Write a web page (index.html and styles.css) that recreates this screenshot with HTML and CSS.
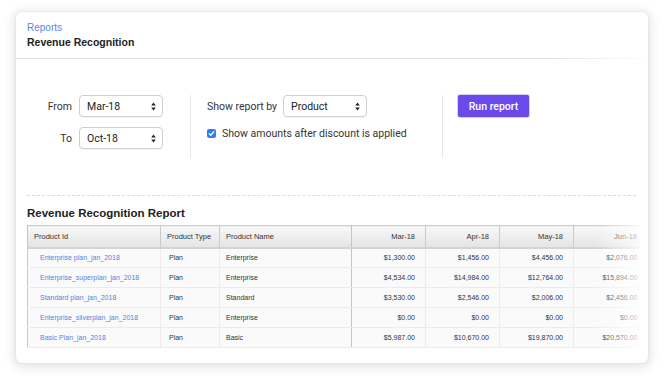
FILE: index.html
```html
<!DOCTYPE html>
<html>
<head>
<meta charset="utf-8">
<link rel="stylesheet" href="styles.css">
</head>
<body>
<div class="card">
  <header class="head">
    <a class="crumb">Reports</a>
    <h1 class="title">Revenue Recognition</h1>
  </header>
  <section class="form">
    <div class="group dates">
      <div class="field">
        <label class="lbl">From</label>
        <div class="select">Mar-18<svg class="arrows" width="5" height="9" viewBox="0 0 5 9"><path d="M2.5 0.5 L4.8 3.6 L0.2 3.6 Z M2.5 8.5 L4.8 5.4 L0.2 5.4 Z" fill="#222"/></svg></div>
      </div>
      <div class="field">
        <label class="lbl">To</label>
        <div class="select">Oct-18<svg class="arrows" width="5" height="9" viewBox="0 0 5 9"><path d="M2.5 0.5 L4.8 3.6 L0.2 3.6 Z M2.5 8.5 L4.8 5.4 L0.2 5.4 Z" fill="#222"/></svg></div>
      </div>
    </div>
    <div class="group by">
      <div class="field">
        <label class="lbl2">Show report by</label>
        <div class="select">Product<svg class="arrows" width="5" height="9" viewBox="0 0 5 9"><path d="M2.5 0.5 L4.8 3.6 L0.2 3.6 Z M2.5 8.5 L4.8 5.4 L0.2 5.4 Z" fill="#222"/></svg></div>
      </div>
      <div class="check">
        <span class="box"><svg width="9" height="9" viewBox="0 0 9 9"><path d="M2.2 4.7 L3.8 6.2 L6.8 2.8" fill="none" stroke="#fff" stroke-width="1.3" stroke-linecap="round" stroke-linejoin="round"/></svg></span>
        <span>Show amounts after discount is applied</span>
      </div>
    </div>
    <div class="group run">
      <button class="btn">Run report</button>
    </div>
  </section>
  <section class="report">
    <h2 class="rtitle">Revenue Recognition Report</h2>
    <div class="tablewrap">
      <table class="grid">
        <colgroup>
          <col class="c-id"><col class="c-type"><col class="c-name"><col class="c-m"><col class="c-m"><col class="c-m"><col class="c-m">
        </colgroup>
        <thead>
          <tr><th>Product Id</th><th>Product Type</th><th class="lastfix">Product Name</th><th class="num">Mar-18</th><th class="num">Apr-18</th><th class="num">May-18</th><th class="num">Jun-18</th></tr>
        </thead>
        <tbody>
          <tr><td class="link">Enterprise plan_jan_2018</td><td class="type">Plan</td><td class="lastfix">Enterprise</td><td class="num">$1,300.00</td><td class="num">$1,456.00</td><td class="num">$4,456.00</td><td class="num">$2,076.00</td></tr>
          <tr><td class="link">Enterprise_superplan_jan_2018</td><td class="type">Plan</td><td class="lastfix">Enterprise</td><td class="num">$4,534.00</td><td class="num">$14,984.00</td><td class="num">$12,764.00</td><td class="num">$15,894.00</td></tr>
          <tr><td class="link">Standard plan_jan_2018</td><td class="type">Plan</td><td class="lastfix">Standard</td><td class="num">$3,530.00</td><td class="num">$2,546.00</td><td class="num">$2,006.00</td><td class="num">$2,456.00</td></tr>
          <tr><td class="link">Enterprise_silverplan_jan_2018</td><td class="type">Plan</td><td class="lastfix">Enterprise</td><td class="num">$0.00</td><td class="num">$0.00</td><td class="num">$0.00</td><td class="num">$0.00</td></tr>
          <tr><td class="link">Basic Plan_jan_2018</td><td class="type">Plan</td><td class="lastfix">Basic</td><td class="num">$5,987.00</td><td class="num">$10,670.00</td><td class="num">$19,870.00</td><td class="num">$20,570.00</td></tr>
        </tbody>
      </table>
      <div class="fade"></div>
    </div>
  </section>
</div>
</body>
</html>
```

FILE: styles.css
```css
* { box-sizing: border-box; }
html, body { margin: 0; padding: 0; background: #fff; }
body {
  width: 664px;
  height: 383px;
  overflow: hidden;
  font-family: "Liberation Sans", Arial, sans-serif;
  color: #222;
  padding: 12px 16px 0 16px;
}
.card {
  width: 632px;
  height: 351px;
  background: #fff;
  border-radius: 6px;
  box-shadow: 0 0 0 1px rgba(0,0,0,0.03), 0 2px 10px 3px rgba(0,0,0,0.1);
  overflow: hidden;
}
.head {
  padding: 9px 11px 8px;
  border-bottom: 1px solid transparent;
  border-image: linear-gradient(to right, #e2e2e2 0%, #e2e2e2 85%, #fff 100%) 1;
  height: 47px;
}
.crumb {
  display: block;
  font-size: 10px;
  line-height: 13px;
  color: #5b84e6;
}
.title {
  margin: 2px 0 0;
  font-size: 10.5px;
  line-height: 13px;
  font-weight: bold;
  color: #222;
}
.form {
  display: flex;
  padding: 36px 11px 0;
  height: 136px;
  font-family: Roboto, "Liberation Sans", sans-serif;
  font-size: 10.5px;
  color: #333;
}
.group {
  height: 63px;
}
.dates {
  width: 164px;
  border-right: 1px solid #e6e6e6;
  display: flex;
  flex-direction: column;
  gap: 10px;
}
.field {
  display: flex;
  align-items: center;
  height: 22px;
}
.lbl {
  width: 45px;
  text-align: right;
  margin-right: 7px;
}
.lbl2 {
  margin-right: 6px;
}
.select {
  width: 84px;
  height: 22px;
  border: 1px solid #cfcfcf;
  border-radius: 4px;
  background: #fff;
  padding: 0 6px 0 7px;
  display: flex;
  align-items: center;
  justify-content: space-between;
  color: #222;
  box-shadow: 0 1px 1px rgba(0,0,0,0.04);
}
.arrows { display: block; }
.by {
  width: 252px;
  padding-left: 16px;
  border-right: 1px solid #e6e6e6;
  display: flex;
  flex-direction: column;
  gap: 8px;
}
.check {
  display: flex;
  align-items: center;
  gap: 6px;
  height: 16px;
}
.box {
  width: 9px;
  height: 9px;
  border-radius: 2px;
  background: #2d7ef2;
  display: flex;
}
.run {
  padding-left: 15px;
}
.btn {
  width: 71px;
  height: 22px;
  border: 0;
  border-radius: 2px;
  background: #6a4bea;
  color: #fff;
  font-family: Roboto, "Liberation Sans", sans-serif;
  font-size: 10.5px;
  font-weight: 500;
  padding: 0;
  box-shadow: 0 0 0 1px rgba(90,60,220,0.25);
}
.report {
  padding: 0 0 0 11px;
}
.report::before {
  content: "";
  display: block;
  width: 609px;
  border-top: 1px dashed #dcdcdc;
}
.rtitle {
  margin: 10px 0 0;
  font-size: 11.5px;
  line-height: 14px;
  font-weight: bold;
  color: #222;
}
.tablewrap {
  position: relative;
  margin-top: 5px;
  width: 613px;
  overflow: hidden;
}
.grid {
  border-collapse: collapse;
  table-layout: fixed;
  width: 620px;
  font-size: 7px;
  color: #333;
}
.c-id { width: 133px; }
.c-type { width: 59px; }
.c-name { width: 132px; }
.c-m { width: 74px; }
.grid th {
  height: 22px;
  font-size: 7.5px;
  font-weight: normal;
  text-align: left;
  padding: 0 6px;
  background: linear-gradient(#f8f8f8, #e4e4e4);
  border: 1px solid #cacaca;
  border-bottom: 2px solid #d4d4d4;
  color: #333;
}
.grid th:first-child { border-left: 1px solid #b9c6d6; }
.grid td {
  height: 20px;
  padding: 0 6px;
  border-left: 1px solid #ececec;
  border-bottom: 1px solid #ececec;
  background: #fafafa;
  white-space: nowrap;
}
.grid td:first-child { border-left: 1px solid #bccbdf; }
.grid td.link { color: #5a7ee0; padding-left: 12px; }
.grid td.type { padding-left: 8px; }
.grid td.lastfix, .grid th.lastfix { border-right: 1px solid #b8c8dc; }
.grid .num { text-align: right; padding-right: 10px; }
.fade {
  position: absolute;
  top: 0;
  right: 0;
  bottom: 0;
  width: 45px;
  background: linear-gradient(to right, rgba(255,255,255,0), rgba(255,255,255,0.8));
}
```
